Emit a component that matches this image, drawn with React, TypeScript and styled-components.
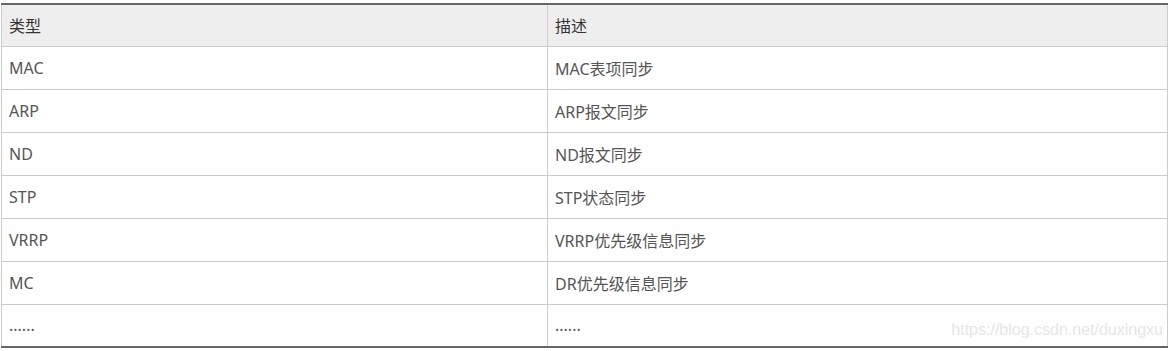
import React from "react";
import styled, { createGlobalStyle } from "styled-components";

type Row = {
  type: string;
  desc: string;
};

const rows: Row[] = [
  { type: "MAC", desc: "MAC表项同步" },
  { type: "ARP", desc: "ARP报文同步" },
  { type: "ND", desc: "ND报文同步" },
  { type: "STP", desc: "STP状态同步" },
  { type: "VRRP", desc: "VRRP优先级信息同步" },
  { type: "MC", desc: "DR优先级信息同步" },
  { type: "......", desc: "......" },
];

const App: React.FC = () => {
  return (
    <Page>
      <GlobalStyle />
      <Frame>
        <Table>
          <thead>
            <tr>
              <HeadCell>类型</HeadCell>
              <HeadCell>描述</HeadCell>
            </tr>
          </thead>
          <tbody>
            {rows.map((row, i) => (
              <tr key={i}>
                <Cell>{row.type}</Cell>
                <Cell>{row.desc}</Cell>
              </tr>
            ))}
          </tbody>
        </Table>
        <Watermark>https://blog.csdn.net/duxingxu</Watermark>
      </Frame>
    </Page>
  );
};

export default App;

const GlobalStyle = createGlobalStyle`
  html, body {
    margin: 0;
    padding: 0;
    background: #fff;
  }
`;

const Page = styled.div`
  padding: 3px 6px 0 1px;
  font-family: "Noto Sans", "Noto Sans CJK SC", sans-serif;
`;

const Frame = styled.div`
  position: relative;
  width: 1167px;
`;

const Table = styled.table`
  width: 100%;
  border-collapse: collapse;
  table-layout: fixed;
  border-top: 2px solid #666;
  border-bottom: 2px solid #666;
  font-size: 16px;
`;

const HeadCell = styled.th`
  height: 42px;
  box-sizing: border-box;
  padding: 0 7px;
  background: #eee;
  color: #333;
  font-weight: normal;
  text-align: left;
  border-left: 1px solid #ccc;
  border-right: 1px solid #ccc;
  border-bottom: 1px solid #ccc;

  &:first-child {
    width: 546px;
  }
`;

const Cell = styled.td`
  height: 43px;
  box-sizing: border-box;
  padding: 0 7px;
  color: #555;
  border: 1px solid #ccc;
  border-top: none;

  tr:last-child > & {
    border-bottom: none;
  }
`;

const Watermark = styled.span`
  position: absolute;
  right: 5px;
  bottom: 9px;
  color: #e6e6e6;
  font-family: "Liberation Sans", Arial, sans-serif;
  font-size: 16px;
  pointer-events: none;
`;
